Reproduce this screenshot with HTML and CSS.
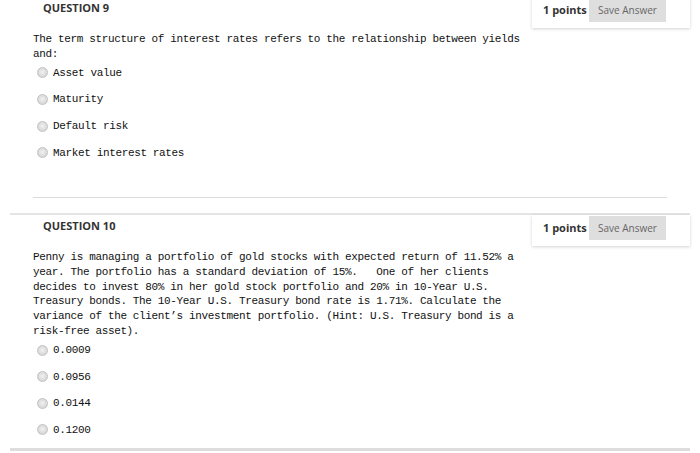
FILE: index.html
```html
<!DOCTYPE html>
<html lang="en">
<head>
<meta charset="utf-8">
<title>Quiz</title>
<link rel="stylesheet" href="styles.css">
</head>
<body>
<main class="page">
  <section class="question">
    <header class="q-head">
      <h2 class="q-title">QUESTION 9</h2>
      <div class="points">
        <span class="pts">1 points</span>
        <button class="save" type="button">Save Answer</button>
      </div>
    </header>
    <div class="q-body">
      <p class="q-text">The term structure of interest rates refers to the relationship between yields and:</p>
      <ul class="options">
        <li><span class="radio"></span>Asset value</li>
        <li><span class="radio"></span>Maturity</li>
        <li><span class="radio"></span>Default risk</li>
        <li><span class="radio"></span>Market interest rates</li>
      </ul>
      <hr class="q-sep">
    </div>
  </section>
  <section class="question">
    <header class="q-head">
      <h2 class="q-title">QUESTION 10</h2>
      <div class="points">
        <span class="pts">1 points</span>
        <button class="save" type="button">Save Answer</button>
      </div>
    </header>
    <div class="q-body">
      <p class="q-text">Penny is managing a portfolio of gold stocks with expected return of 11.52% a year. The portfolio has a standard deviation of 15%. &nbsp; One of her clients decides to invest 80% in her gold stock portfolio and 20% in 10-Year U.S. Treasury bonds. The 10-Year U.S. Treasury bond rate is 1.71%. Calculate the variance of the client’s investment portfolio. (Hint: U.S. Treasury bond is a risk-free asset).</p>
      <ul class="options">
        <li><span class="radio"></span>0.0009</li>
        <li><span class="radio"></span>0.0956</li>
        <li><span class="radio"></span>0.0144</li>
        <li><span class="radio"></span>0.1200</li>
      </ul>
    </div>
  </section>
  <div class="question-next"></div>
</main>
</body>
</html>
```

FILE: styles.css
```css
html, body {
  margin: 0;
  padding: 0;
  background: #ffffff;
  overflow: hidden;
}

.page {
  margin-top: -5px;
  padding-left: 10px;
  width: 680px;
}

.question {
  border-top: 2px solid #e4e4e4;
}

.q-head {
  display: flex;
  align-items: flex-start;
  height: 31px;
}

.q-title {
  margin: 0;
  padding: 4px 0 0 33px;
  font-family: "Open Sans", "Liberation Sans", sans-serif;
  font-size: 11px;
  line-height: 14px;
  font-weight: 700;
  color: #333333;
}

.points {
  margin-left: auto;
  width: 158px;
  height: 31px;
  box-sizing: border-box;
  display: flex;
  align-items: flex-start;
  padding: 1px 24px 0 11px;
  background: #ffffff;
  box-shadow: 0 1px 3px rgba(0, 0, 0, 0.18);
}

.pts {
  font-family: "Open Sans", "Liberation Sans", sans-serif;
  font-size: 11px;
  font-weight: 700;
  color: #333333;
  line-height: 24px;
  width: 46px;
}

.save {
  margin: 0;
  border: 0;
  width: 77px;
  height: 24px;
  padding: 0;
  background: #dedede;
  font-family: "Open Sans", "Liberation Sans", sans-serif;
  font-size: 10px;
  color: #666666;
  line-height: 24px;
  text-align: center;
}

.q-body {
  padding: 4px 23px 5px 23px;
}

.q-text {
  margin: 0;
  width: 492px;
  font-family: "Liberation Mono", "DejaVu Sans Mono", monospace;
  font-size: 11px;
  letter-spacing: -0.36px;
  line-height: 14.8px;
  color: #111111;
}

.options {
  list-style: none;
  margin: -2px 0 0 0;
  padding: 0;
}

.options li {
  display: flex;
  align-items: center;
  height: 26.6px;
  padding-left: 4px;
  font-family: "Liberation Mono", "DejaVu Sans Mono", monospace;
  font-size: 11px;
  letter-spacing: -0.36px;
  color: #111111;
}

.radio {
  width: 9px;
  height: 9px;
  border: 1px solid #c2c2c2;
  border-radius: 50%;
  margin-right: 5px;
  background: radial-gradient(circle at 50% 45%, #f2f2f2 0, #e0e0e0 45%, #cfcfcf 100%);
  flex: none;
}

.q-sep {
  margin: 31px 0 10px 0;
  border: 0;
  border-top: 1px solid #dcdcdc;
  height: 0;
}

.question-next {
  border-top: 3px solid #dddddd;
}
```
